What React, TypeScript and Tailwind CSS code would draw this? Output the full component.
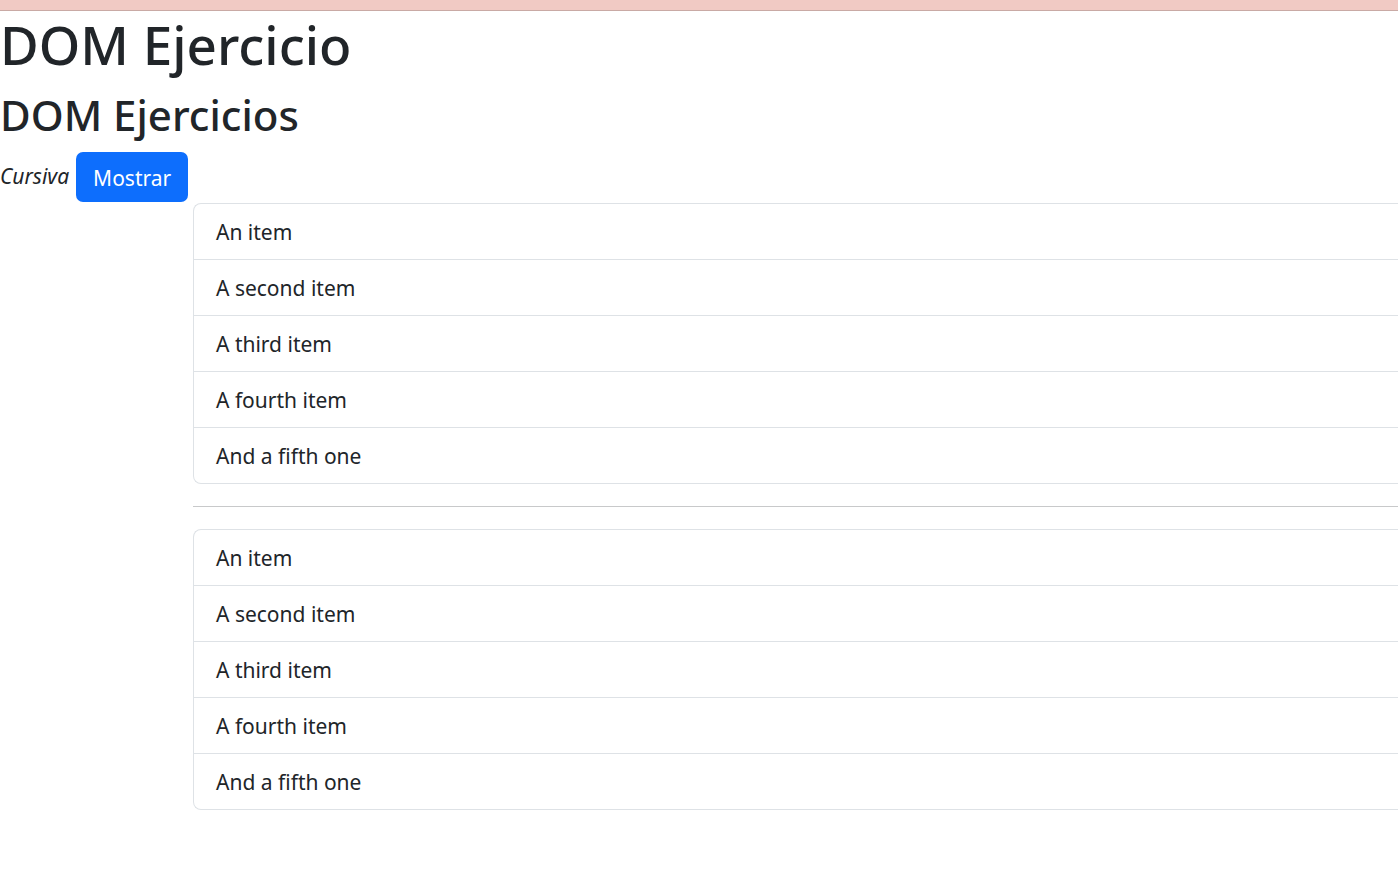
const items = ['An item', 'A second item', 'A third item', 'A fourth item', 'And a fifth one'];

function ItemList() {
  return (
    <ul className="ml-[193px] border border-r-0 border-[#dee2e6] rounded-l-[8px]">
      {items.map((item, index) => (
        <li
          key={index}
          className={
            index === 0
              ? 'h-[55px] flex items-center pl-[22px] pt-[2px] text-[21px]'
              : 'h-[56px] flex items-center pl-[22px] pt-[2px] text-[21px] border-t border-[#dee2e6]'
          }
        >
          {item}
        </li>
      ))}
    </ul>
  );
}

export default function App() {
  return (
    <div className="min-h-screen bg-white text-[#212529] font-['Noto_Sans',sans-serif] overflow-hidden">
      {/* Top bar */}
      <div className="h-[11px] bg-[#f1cac4] border-b border-[#c9aaa5]"></div>

      <h1 className="text-[53px] leading-[67px] font-medium mb-[10px]">DOM Ejercicio</h1>
      <h2 className="text-[42px] leading-[54px] font-medium mb-[10px]">DOM Ejercicios</h2>

      <div className="flex items-center gap-[7px]">
        <i className="text-[21px]">Cursiva</i>
        <button className="h-[50px] px-[17px] pt-[3px] bg-[#0d6efd] text-white text-[21px] rounded-[7px]">
          Mostrar
        </button>
      </div>

      <div className="mt-[1px]">
        <ItemList />
      </div>
      <hr className="ml-[193px] my-[22px] border-t border-[#c8c9ca]" />
      <ItemList />
    </div>
  );
}
